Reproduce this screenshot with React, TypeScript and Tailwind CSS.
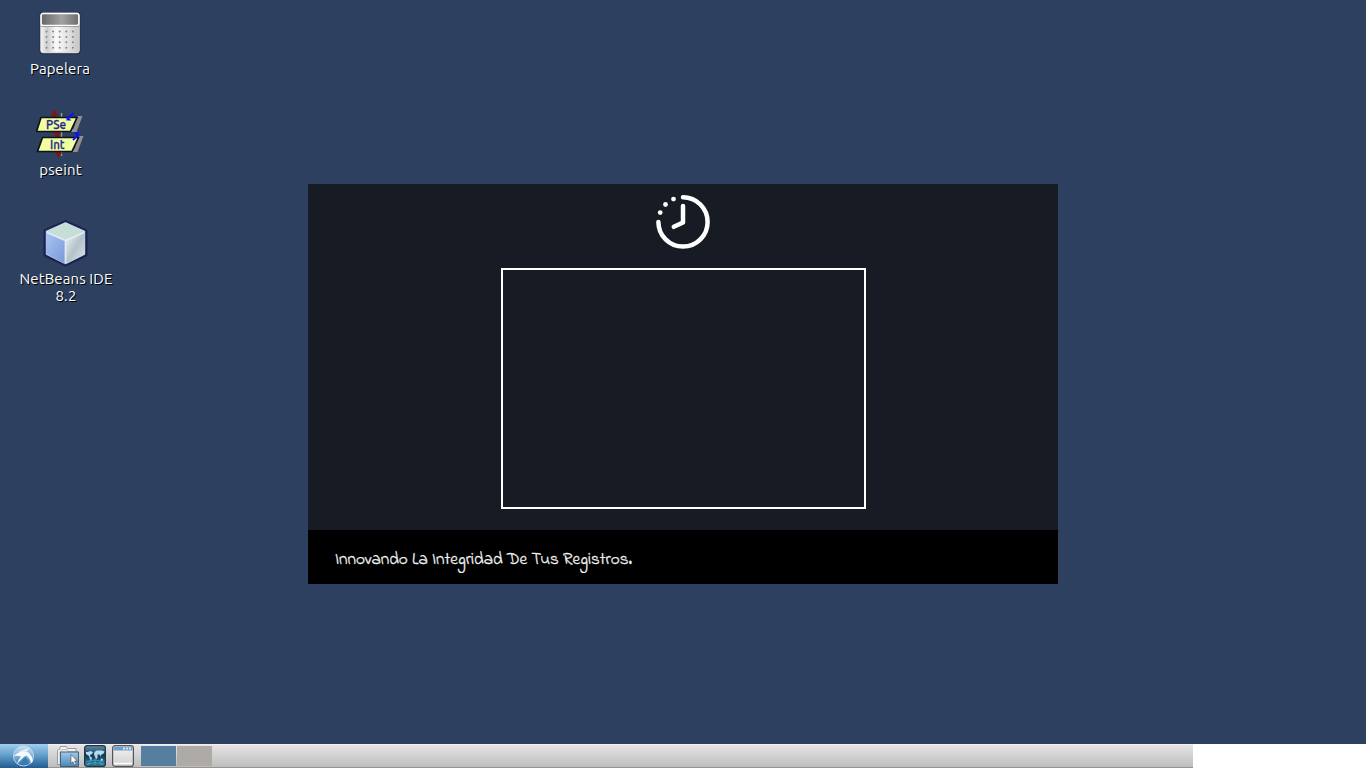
import type { ReactNode } from "react";

function TrashIcon() {
  const dots: [number, number][] = [];
  for (let r = 0; r < 4; r++) for (let c = 0; c < 5; c++) dots.push([6.5 + c * 6.6, 19 + r * 5.4]);
  return (
    <svg width="44" height="46" viewBox="-2 -1.5 44 46" className="block">
      <defs>
        <linearGradient id="binBody" x1="0" x2="1" y1="0" y2="0">
          <stop offset="0" stopColor="#f4f4f4" />
          <stop offset=".17" stopColor="#cdcdcd" />
          <stop offset=".4" stopColor="#fafafa" />
          <stop offset=".75" stopColor="#dedede" />
          <stop offset="1" stopColor="#c4c4c4" />
        </linearGradient>
        <linearGradient id="binTop" x1="0" x2="1" y1="0" y2="0">
          <stop offset="0" stopColor="#666" />
          <stop offset=".55" stopColor="#a2a2a2" />
          <stop offset="1" stopColor="#6c6c6c" />
        </linearGradient>
      </defs>
      <rect x="-.5" y="-.3" width="41" height="42" rx="3" fill="#1e2735" opacity=".65" />
      <rect x=".8" y=".8" width="38.4" height="39.400" rx="2" fill="url(#binBody)" stroke="#e4e4e4" />
      <rect x="1.2" y="1" width="37.6" height="11.8" rx="2" fill="url(#binTop)" stroke="#fff" strokeWidth="1.3" />
      <path d="M1 14h38" stroke="#777" strokeWidth=".6" />
      {dots.map(([x, y], i) => (
        <circle key={i} cx={x} cy={y} r="1" fill="#888" />
      ))}
    </svg>
  );
}

function PseintIcon() {
  return (
    <svg width="48" height="50" viewBox="0.5 0 48 50" className="block [text-shadow:none]">
      <path d="M26 3v43" stroke="#9a9a9a" strokeWidth="1.4" />
      <path d="M42 6h5l-6 16H9v-3h29zM43 26h5l-6 16H10v-3h29z" fill="#8f8f8f" />
      <path d="M19 0v7M21.500 20v7M23 41v3" stroke="#861313" strokeWidth="3" />
      <path d="M15 3.500h8L19 8zM17.500 22.500h8l-4 5zM19 42.500h8L23 47.500z" fill="#861313" />
      <path d="M5.500 7.500h36L35 21.500H1zM7 27.500h36L36.500 41.500H2z" fill="#f0ffa0" stroke="#101319" strokeWidth="1.7" />
      <text x="10.500" y="18.500" fontSize="12" fontWeight="500" fill="#25278e" stroke="#25278e" strokeWidth=".3" fontFamily="Ubuntu, Noto Sans, sans-serif" textLength="20" lengthAdjust="spacingAndGlyphs">PSe</text>
      <text x="14.500" y="39" fontSize="12" fontWeight="500" fill="#25278e" stroke="#25278e" strokeWidth=".3" fontFamily="Ubuntu, Noto Sans, sans-serif" textLength="14.500" lengthAdjust="spacingAndGlyphs">Int</text>
      <path d="M38 3 33 8M37.500 30l5-5" stroke="#1010ff" strokeWidth="1.8" />
      <path d="M31 5.500v5h5zM43.500 27.500v-5.500l-5.500 1z" fill="#1010ff" />
    </svg>
  );
}

function NetBeansIcon() {
  return (
    <svg width="48" height="48" viewBox="0.5 0 48 48" className="block">
      <defs>
        <linearGradient id="cubeL" x1="0" x2="1" y1="0" y2="1">
          <stop stopColor="#a9c5f4" />
          <stop offset="1" stopColor="#7897d6" />
        </linearGradient>
        <linearGradient id="cubeR" x1="0" x2="1" y1="0" y2="1">
          <stop stopColor="#f2f7f8" />
          <stop offset=".5" stopColor="#b4c3cb" />
          <stop offset="1" stopColor="#dce8e9" />
        </linearGradient>
        <filter id="cubeGlow"><feGaussianBlur stdDeviation=".6" /></filter>
      </defs>
      <path d="M24 3 44 12v24L24 45.500 4 36V12z" fill="#1d2058" stroke="#1d2058" strokeWidth="4" strokeLinejoin="round" filter="url(#cubeGlow)" />
      <path d="M24 4 43 12.500V35L24 44.500 5 35V12.500z" fill="#c6ddd8" stroke="#c6ddd8" strokeWidth="1.400" strokeLinejoin="round" />
      <path d="M4.500 13 24 21.500V45L5.500 35.500q-1-.5-1-1.500z" fill="url(#cubeL)" />
      <path d="M43.500 13 24 21.500V45l18.500-9.500q1-.5 1-1.500z" fill="url(#cubeR)" />
      <path d="M5.500 13.500 24 21.500l18.500-8M24 22v22" fill="none" stroke="#e6f2fb" strokeWidth="1.800" opacity=".85" />
    </svg>
  );
}

function Shortcut({ place, icon, children }: { place: string; icon: ReactNode; children: ReactNode }) {
  return (
    <div className={"absolute flex flex-col items-center text-center text-[15px] leading-[17px] whitespace-nowrap text-white [text-shadow:1px_1px_0_#000] " + place}>
      {icon}
      {children}
    </div>
  );
}

function ClockIcon() {
  return (
    <svg width="56" height="56" viewBox="655 194 56 56" className="block">
      <path d="M683 197.300A24.600 24.600 0 1 1 658.400 221.900M683 206v16.500l-9.200 4.300" fill="none" stroke="#fff" strokeWidth="4.500" strokeLinecap="round" strokeLinejoin="round" />
      <circle cx="660.200" cy="212.600" r="2.400" fill="#fff" />
      <circle cx="665.500" cy="204.500" r="2.400" fill="#fff" />
      <circle cx="673.500" cy="199.100" r="2.400" fill="#fff" />
    </svg>
  );
}

function SplashWindow() {
  return (
    <section className="absolute top-[184px] left-[308px] flex h-[400px] w-[750px] flex-col bg-[#171b24]">
      <div className="flex h-[346px] flex-col items-center pt-[10px]">
        <ClockIcon />
        <div className="mt-[18px] ml-px h-[241px] w-[365px] border-2 border-white" />
      </div>
      <footer className="flex h-[54px] items-center bg-black pt-[5px] pl-[27px]">
        <svg width="300" height="26" viewBox="0 0 300 26" className="block">
          <text x="0" y="17" fontSize="16.500" fill="#f4f4f4" stroke="#f4f4f4" strokeWidth=".3" fontFamily="Bradley Hand, Indie Flower, Lato, sans-serif" textLength="297" lengthAdjust="spacingAndGlyphs">
            Innovando La Integridad De Tus Registros.
          </text>
        </svg>
      </footer>
    </section>
  );
}

function StartButton() {
  return (
    <div className="flex h-6 w-12 justify-center bg-linear-to-b from-[#a2cdf0] via-[#5f9ac8] to-[#1f5c91]">
      <svg width="24" height="24" viewBox="0 0 24 24" className="block">
        <defs>
          <linearGradient id="startDisc" x1="0" x2="0" y1="0" y2="1">
            <stop stopColor="#c9e0f3" />
            <stop offset=".5" stopColor="#7fb0d8" />
            <stop offset="1" stopColor="#2b73ae" />
          </linearGradient>
        </defs>
        <circle cx="11.500" cy="12" r="10" fill="url(#startDisc)" stroke="#c5dced" strokeWidth=".9" />
        <path d="M1.500 12.500Q4 9 8 8Q13 5.500 17 9Q20.500 12.500 21 17L19 19.500Q18 14 14.500 11.500Q12 12 10 14.500L4.500 20.500Q6.500 16 9 12.500Q5 11 1.500 12.500z" fill="#f5faff" />
        <path d="M6 7.500Q12 6 18 3.500Q16 6.500 13 8z" fill="#e6f1fa" />
        <path d="M13.500 13Q16 15 16.500 20.500L8 20.500Q10 15.500 13.500 13z" fill="#3b7cb0" />
      </svg>
    </div>
  );
}

function FilesIcon() {
  return (
    <svg width="24" height="24" viewBox="0 0 24 24" className="block">
      <defs>
        <linearGradient id="folder" x1="0" x2="0" y1="0" y2="1">
          <stop stopColor="#a3c9e8" />
          <stop offset="1" stopColor="#4787ba" />
        </linearGradient>
      </defs>
      <path d="M1.500 20.500V6.500l1-1h1l1-3h6l1 2h8.500v16z" fill="#f1f1f1" stroke="#83898e" strokeWidth=".8" />
      <path d="M4 22V7.500h1l1-2h5l1 2h10V22z" fill="#ececec" stroke="#a0a8ae" strokeWidth=".7" />
      <path d="M4.500 22.500V8h18v14.500z" fill="url(#folder)" stroke="#39566d" strokeWidth=".9" />
      <path d="M15 10.500v9l2-1.800 1.500 3.300 1.600-.8-1.500-3.100h2.700z" fill="#fff" stroke="#444" strokeWidth=".6" />
    </svg>
  );
}

function GlobeIcon() {
  return (
    <svg width="22" height="22" viewBox="0 0 22 22" className="block">
      <defs>
        <linearGradient id="sea" x1="0" x2="0" y1="0" y2="1">
          <stop stopColor="#5f90ae" />
          <stop offset=".45" stopColor="#123a58" />
          <stop offset="1" stopColor="#2681a9" />
        </linearGradient>
      </defs>
      <rect x=".6" y=".6" width="20.800" height="20.800" rx="2.500" fill="url(#sea)" stroke="#243643" strokeWidth="1.200" />
      <path d="M2 7h2l2-1 3 1-1 2-2 1v1l2 2-1 3-1-2-1-3-3-2zM10.500 7l2-1.500 5 0 3 1-1 2-2 1-1 2-1-2-2 0 0 3-1.500 2-1-3-1-2zM17 13.500l2 .5-.5 2-2-.5z" fill="#b4dcea" />
      <path d="M2 16.500q9-3 18 0M2 19q9-3 18 0M11 14v6M6 16l-2 4M16 16l2 4" fill="none" stroke="#69b6d8" strokeWidth=".6" />
    </svg>
  );
}

function WindowIcon() {
  return (
    <svg width="22" height="22" viewBox="0 0 22 22" className="block">
      <defs>
        <linearGradient id="pane" x1="0" x2="0" y1="0" y2="1">
          <stop stopColor="#f4f4f4" />
          <stop offset="1" stopColor="#d0d0d0" />
        </linearGradient>
      </defs>
      <rect x=".6" y=".6" width="20.800" height="20.800" rx="2.500" fill="url(#pane)" stroke="#555" strokeWidth="1.200" />
      <path d="M1.500 1.500h19v4h-19z" fill="#6f9fc9" />
      <path d="M11 2.500h2v2h-2zM14 2.500h2v2h-2zM17 2.500h2v2h-2z" fill="#d8e9f6" />
      <path d="M2 18.500h18" stroke="#fff" strokeWidth="1.500" />
    </svg>
  );
}

function Taskbar() {
  return (
    <div className="flex h-6 bg-white">
      <div className="flex w-[1193px] bg-linear-to-b from-[#e8e6e6] to-[#bcbcbc] shadow-[inset_0_1px_0_#f4eef0,inset_0_-1px_0_#969292]">
        <StartButton />
        <div className="ml-2 flex items-start">
          <FilesIcon />
          <div className="mt-px ml-1 flex gap-[6px]">
            <GlobeIcon />
            <WindowIcon />
          </div>
        </div>
        <div className="mt-[2px] ml-[7px] flex h-5 gap-px">
          <div className="w-[35px] bg-[#567e9f]" />
          <div className="w-[35px] bg-[#aeaaa5]" />
        </div>
      </div>
    </div>
  );
}

export default function App() {
  return (
    <main className="flex h-[768px] w-[1366px] flex-col overflow-hidden bg-[#2d4060] font-['Ubuntu','Noto_Sans',sans-serif]">
      <div className="relative flex-1">
        <Shortcut place="top-[11px] left-[20px] w-[80px]" icon={<TrashIcon />}>
          <span className="mt-[3px] tracking-[0.1px]">Papelera</span>
        </Shortcut>
        <Shortcut place="top-[110px] left-[20px] w-[80px]" icon={<PseintIcon />}>
          <span className="mt-px ml-px tracking-[0.1px]">pseint</span>
        </Shortcut>
        <Shortcut place="top-[219px] left-[10px] w-[112px]" icon={<NetBeansIcon />}>
          <span className="mt-[3px] tracking-[0.1px]">NetBeans IDE<br />8.2</span>
        </Shortcut>
        <SplashWindow />
      </div>
      <Taskbar />
    </main>
  );
}
